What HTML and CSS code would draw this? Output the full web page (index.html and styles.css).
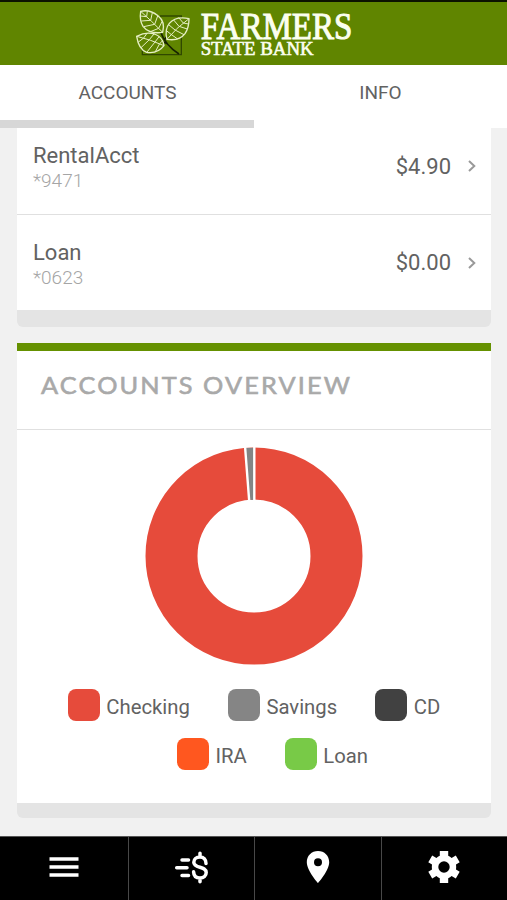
FILE: index.html
```html
<!DOCTYPE html>
<html lang="en">
<head>
<meta charset="utf-8">
<title>Farmers State Bank</title>
<link rel="stylesheet" href="styles.css">
</head>
<body>
<div class="app">
  <header class="brand">
    <svg class="logo" viewBox="0 0 750 195" role="img" aria-label="Farmers State Bank">
      <path class="logo-frame" d="M120 48H184V164H67V145"/>
      <path class="logo-stem" d="M122 96Q135 135 177 162M117 128Q132 125 143 131M145 105Q135 115 132 122"/>
      <g class="leaf">
        <path d="M62 34Q88 27 114 47Q137 65 128 97Q88 103 69 79Q58 61 62 34Z"/>
        <path d="M62 34Q96 64 128 97M80 50L82 34M92 61L97 38M104 73L113 48M116 85L126 65M79 50L61 48M91 61L64 63M104 73L71 80M116 85L91 95"/>
        <path d="M207 56Q167 48 148 70Q133 88 141 118Q178 124 195 101Q207 83 207 56Z"/>
        <path d="M207 56Q169 83 141 118M190 69L176 53M177 79L161 60M165 90L146 74M153 103L138 91M190 69L206 72M177 79L202 87M165 90L192 104M153 103L173 117"/>
        <path d="M50 109Q78 94 104 102Q128 111 132 137Q113 162 80 157Q56 148 50 109Z"/>
        <path d="M50 109Q90 118 132 137M71 114L81 100M88 119L102 102M105 126L118 109M119 131L129 121M71 114L54 127M88 119L63 143M105 126L81 156M119 131L105 157"/>
      </g>
      <text class="logo-big" x="242" y="116" textLength="455" lengthAdjust="spacingAndGlyphs">FARMERS</text>
      <text class="logo-small" x="242" y="166" textLength="339" lengthAdjust="spacingAndGlyphs">STATE BANK</text>
    </svg>
  </header>
  <nav class="tabs">
    <a class="tab active">ACCOUNTS</a>
    <a class="tab">INFO</a>
  </nav>
  <main class="content">
    <section class="card accounts">
      <div class="row">
        <div class="who"><div class="name">RentalAcct</div><div class="num">*9471</div></div>
        <div class="amount">$4.90</div>
        <svg class="chev" viewBox="0 0 8 12"><path d="M1 1L6.3 6L1 11"/></svg>
      </div>
      <div class="row">
        <div class="who"><div class="name">Loan</div><div class="num">*0623</div></div>
        <div class="amount">$0.00</div>
        <svg class="chev" viewBox="0 0 8 12"><path d="M1 1L6.3 6L1 11"/></svg>
      </div>
    </section>
    <section class="card overview">
      <h2 class="heading"><svg viewBox="0 0 312 30"><text x="0" y="22.500" textLength="311" lengthAdjust="spacingAndGlyphs">ACCOUNTS OVERVIEW</text></svg></h2>
      <svg class="donut" viewBox="0 0 218 218">
        <circle class="ring" cx="109" cy="109" r="82.5"/>
        <path class="savings" d="M109 0.7V53L104.5 52.7L100.3 0.9Z"/>
        <path class="gap" d="M109.3 -1V54M100 -1L104.2 54"/>
      </svg>
      <div class="legend">
        <div class="line">
          <span class="item"><i class="swatch checking"></i>Checking</span>
          <span class="item"><i class="swatch save"></i>Savings</span>
          <span class="item"><i class="swatch cd"></i>CD</span>
        </div>
        <div class="line trailing">
          <span class="item"><i class="swatch ira"></i>IRA</span>
          <span class="item"><i class="swatch loan"></i>Loan</span>
        </div>
      </div>
    </section>
  </main>
  <nav class="bar">
    <a class="cell"><svg viewBox="0 0 36 36"><path class="s3" d="M3.5 10H32.5M3.5 18H32.5M3.5 26H32.5"/></svg></a>
    <a class="cell"><svg viewBox="0 0 36 36"><path class="s3 round" d="M8 11H14.5M2.7 18.7H13M8 26.5H14.5M32 14.5C32 10.5 29.5 8 26 8C22.2 8 19.8 10.3 19.8 13.2C19.8 20 32.2 16.5 32.2 23.6C32.2 26.8 29.8 29 26 29C22.3 29 19.8 26.8 19.6 22.8M26 4.2V8M26 29V32.8"/></svg></a>
    <a class="cell"><svg viewBox="0 0 36 36"><path class="fill" fill-rule="evenodd" d="M18 2C11.6 2 6.8 6.8 6.8 13.2C6.8 21.5 18 34 18 34S29.2 21.5 29.2 13.2C29.2 6.8 24.4 2 18 2ZM18 17.2A4 4 0 1 1 18 9.2A4 4 0 0 1 18 17.2Z"/></svg></a>
    <a class="cell"><svg viewBox="0 0 36 36"><path class="fill" fill-rule="evenodd" d="M13.8 2H22.2V6.8Q24.2 7.6 25.6 8.9L29.8 6.6L33.7 13.2L30 15.4Q30.4 18 30 20.6L33.7 22.8L29.8 29.4L25.6 27.1Q24.2 28.4 22.2 29.2V34H13.8V29.2Q11.8 28.4 10.4 27.1L6.2 29.4L2.3 22.8L6 20.6Q5.6 18 6 15.4L2.3 13.2L6.2 6.6L10.4 8.9Q11.8 7.6 13.8 6.8ZM18 12.3A5.7 5.7 0 1 0 18 23.7A5.7 5.7 0 1 0 18 12.3Z"/></svg></a>
  </nav>
</div>
</body>
</html>
```
FILE: styles.css
```css
* { box-sizing: border-box; }
body { margin: 0; font-family: Roboto, "Liberation Sans", sans-serif; color: #626262; background: #f1f1f1; }
svg { display: block; }
.app { height: 900px; display: flex; flex-direction: column; overflow: hidden; }

.brand { height: 65px; flex: none; background: #608500; border-top: 2px solid #0b1200; padding-left: 120px; }
.logo { width: 250px; height: 65px; margin-top: -2px; overflow: visible; }
.logo-frame { fill: none; stroke: #304800; stroke-width: 4; }
.logo-stem { fill: none; stroke: #172300; stroke-width: 5; }
.leaf path { fill: none; stroke: #e6efc4; stroke-width: 3; stroke-linejoin: round; }
.leaf path:nth-child(odd) { fill: #608500; stroke-width: 4; }
.logo text { font-family: "Liberation Serif", serif; fill: #fbfff0; stroke: #fbfff0; }
.logo-big { font-size: 112px; stroke-width: 3; }
.logo-small { font-size: 56px; stroke-width: 1.8; }

.tabs { height: 63px; flex: none; display: flex; background: #fff; }
.tab { flex: 1; font-size: 19px; line-height: 56px; height: 63px; text-align: center; border-bottom: 8px solid transparent; }
.active { border-color: #d7d7d7; padding-left: 1px; }

.content { flex: 1; padding: 0 16px 0 17px; }
.card { background: #fff; border-bottom: solid #e4e4e4; border-radius: 0 0 6px 6px; }
.accounts { height: 199px; border-bottom-width: 17px; }
.row { height: 86px; display: flex; align-items: center; padding: 0 15px 10px 16px; }
.row + .row { height: 96px; border-top: 1px solid #e0e0e0; padding-bottom: 0; }
.who { flex: 1; padding-top: 4px; }
.name { font-size: 22px; line-height: 26px; }
.num { font-size: 19px; line-height: 24px; font-weight: 300; color: #a5a5a5; }
.amount { font-size: 22px; }
.chev { width: 8px; height: 12px; margin-left: 17px; }
.chev path { fill: none; stroke: #999; stroke-width: 2; }

.overview { margin-top: 16px; height: 475px; border-top: 8px solid #659100; border-bottom-width: 15px; }
.heading { margin: 0; height: 79px; border-bottom: 1px solid #e0e0e0; padding: 20px 0 0 24px; }
.heading svg { width: 312px; height: 30px; overflow: visible; }
.heading text { font-family: Lato, sans-serif; font-size: 24px; font-weight: 400; letter-spacing: 2px; fill: #a9a9a9; stroke: #a9a9a9; stroke-width: .6; }
.donut { width: 218px; height: 218px; margin: 17px auto 0; }
.ring { fill: none; stroke: #e64b3b; stroke-width: 52; }
.savings { fill: #838585; }
.gap { fill: none; stroke: #fff; stroke-width: 2.4; }
.legend { padding-top: 24px; }
.line { display: flex; justify-content: center; gap: 38px; height: 49px; }
.trailing { padding-left: 37px; }
.item { display: flex; height: 32px; gap: 6.6px; font-size: 20.3px; line-height: 37px; }
.swatch { width: 32px; height: 32px; border-radius: 8px; }
.checking { background: #e64b3b; }
.save { background: #858585; }
.cd { background: #414141; }
.ira { background: #ff571f; }
.loan { background: #78ca47; }

.bar { height: 64px; flex: none; display: flex; background: #000; border-top: 1px solid #555; }
.cell { flex: 1; display: flex; justify-content: center; padding-top: 12px; }
.cell:first-child { flex: none; width: 128px; }
.cell + .cell { border-left: 1px solid #484848; }
.cell svg { width: 36px; height: 36px; }
.s3 { fill: none; stroke: #fff; stroke-width: 3.5; }
.round { stroke-linecap: round; }
.fill { fill: #fff; }
```
